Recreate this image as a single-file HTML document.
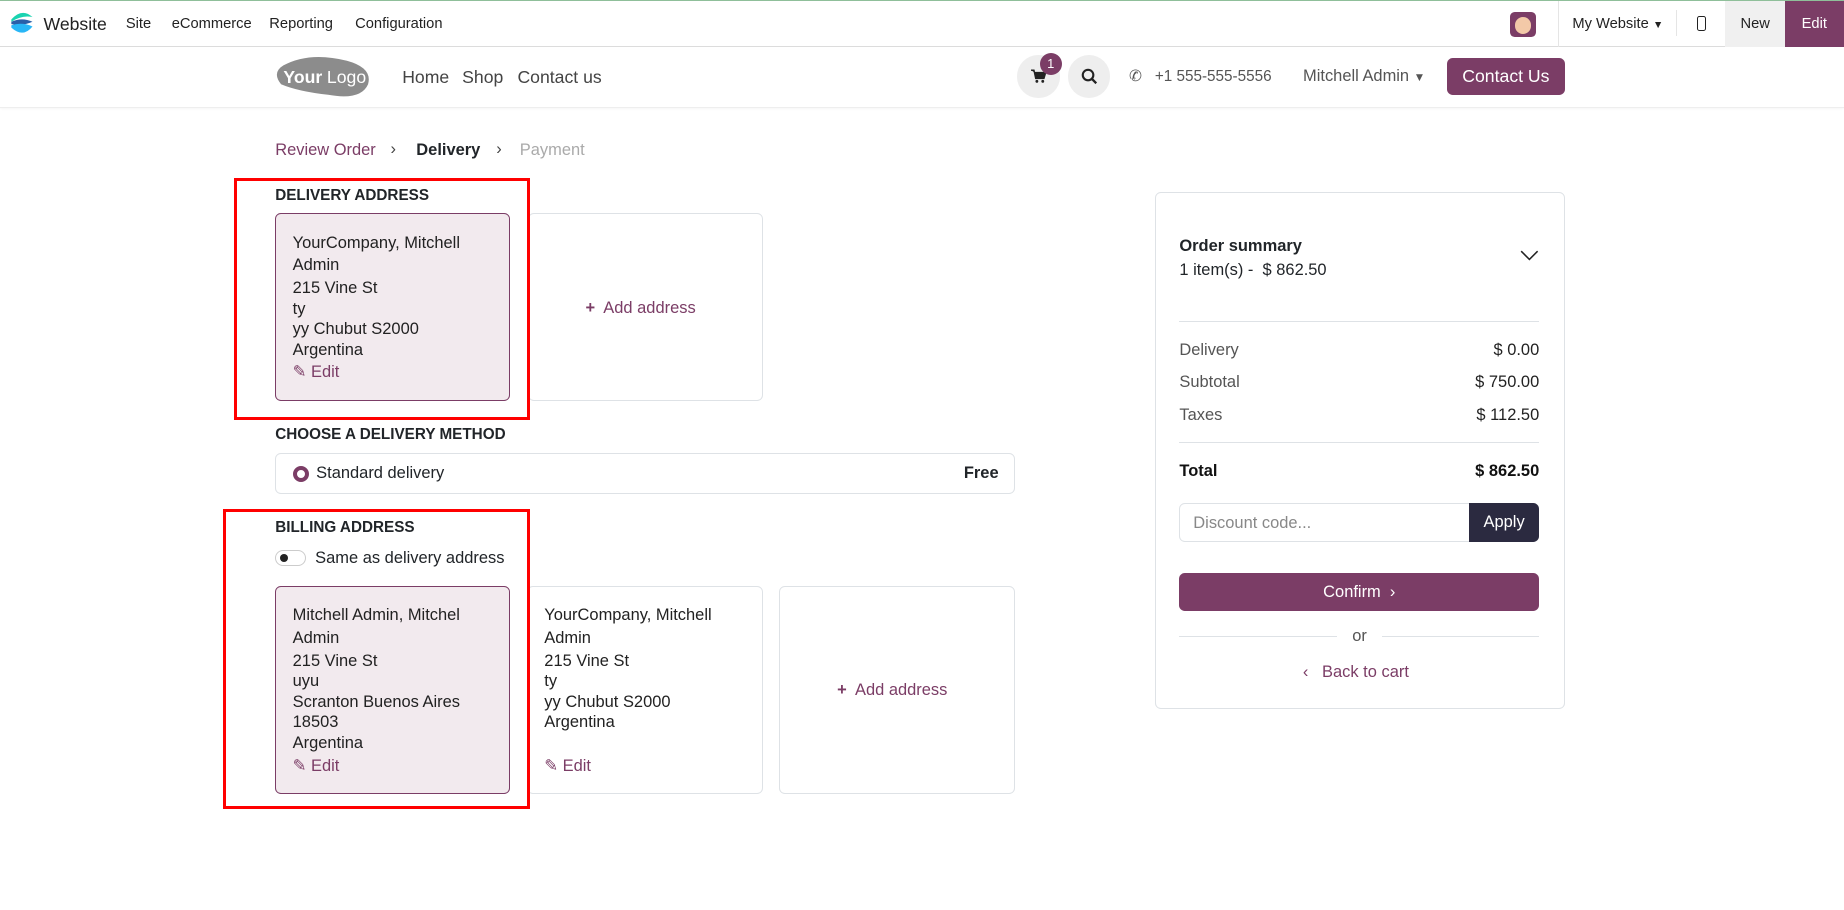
<!DOCTYPE html>
<html><head><meta charset="utf-8"><style>
html,body{margin:0;padding:0;background:#fff;overflow:hidden}
body{width:1844px;height:910px}
#w{zoom:1.17602;width:1568px;height:774px;position:relative;font-family:"Liberation Sans",sans-serif;color:#212529}
.a{position:absolute;white-space:nowrap}
.top{position:absolute;left:0;top:0;width:1568px;height:40px;border-top:1px solid #8fbf9a;border-bottom:1px solid #dcdcdc;box-sizing:border-box;font-size:12.5px;color:#222}
.hdr{position:absolute;left:0;top:40px;width:1568px;height:51px;border-bottom:1px solid #eee;box-shadow:0 1px 2px rgba(0,0,0,.05)}
.card{position:absolute;border:1px solid #dee2e6;border-radius:5px;box-sizing:border-box;background:#fff}
.sel{background:#f2eaee;border-color:#7b3d66}
.addr{position:absolute;left:14px;font-size:14px;line-height:17.5px;color:#222}
.edit{color:#7b3d66}
.red{position:absolute;border:3px solid #f00;box-sizing:border-box}
.h{font-weight:bold;font-size:13px;position:absolute}
.hr{position:absolute;height:1px;background:#dee2e6}
.row{position:absolute;left:20px;width:306px;font-size:14px;display:flex;justify-content:space-between;color:#555}
.row b{font-weight:normal;color:#222}
</style></head><body><div id="w">
<div class="top">
 <svg class="a" style="left:8px;top:8px" width="22" height="22" viewBox="0 0 22 22"><path d="M2 8 Q11 -2 20 6 Q11 4 2 10Z" fill="#1ad3b0"/><path d="M2 10 Q11 6 20 10 Q11 14 2 12Z" fill="#2a5fa8"/><path d="M2 13 Q11 10 20 14 Q12 24 2 15Z" fill="#28b6f6"/></svg>
 <span class="a" style="left:37px;top:11px;font-size:15px">Website</span>
 <span class="a" style="left:107px;top:13px">Site</span>
 <span class="a" style="left:146px;top:13px">eCommerce</span>
 <span class="a" style="left:229px;top:13px">Reporting</span>
 <span class="a" style="left:302px;top:13px">Configuration</span>
 <div class="a" style="left:1284px;top:9px;width:22px;height:22px;border-radius:4px;background:#7b3d66"><div style="margin:5px 4px;width:14px;height:14px;border-radius:50%;background:#f3c9a8"></div></div>
 <div class="a" style="left:1325px;top:0;width:1px;height:39px;background:#e5e5e5"></div>
 <span class="a" style="left:1337px;top:13px">My Website <span style="font-size:9px">▼</span></span>
 <div class="a" style="left:1425px;top:8px;width:1px;height:22px;background:#e5e5e5"></div>
 <div class="a" style="left:1443px;top:13px;width:6px;height:11px;border:1.5px solid #222;border-radius:2px"></div>
 <div class="a" style="left:1467px;top:0;width:51px;height:39px;background:#f0f0f0"><span class="a" style="left:13px;top:13px">New</span></div>
 <div class="a" style="left:1518px;top:0;width:50px;height:39px;background:#7b3d66;color:#fff"><span class="a" style="left:14px;top:13px">Edit</span></div>
</div>
<div class="hdr">
 <svg class="a" style="left:233px;top:8px" width="84" height="36" viewBox="0 0 84 36"><path d="M8 8 Q30 -4 62 4 Q84 10 80 24 Q74 38 46 33 Q20 30 6 24 Q-2 14 8 8Z" fill="#8c8c8c"/><text x="8" y="23" font-family="Liberation Sans" font-size="15" font-weight="bold" fill="#fff">Your</text><text x="45" y="23" font-family="Liberation Sans" font-size="15" fill="#fff">Logo</text></svg>
 <span class="a" style="left:342px;top:17px;font-size:15px;color:#444">Home</span>
 <span class="a" style="left:393px;top:17px;font-size:15px;color:#444">Shop</span>
 <span class="a" style="left:440px;top:17px;font-size:15px;color:#444">Contact us</span>
 <div class="a" style="left:865px;top:7px;width:36px;height:36px;border-radius:50%;background:#eee"><svg class="a" style="left:12px;top:12px" width="13" height="12" viewBox="0 0 13 12"><path d="M0 1H2.5L4 8H11L12.5 3H3" fill="#222" stroke="#222" stroke-width="1.2"/><circle cx="5" cy="10.5" r="1.2" fill="#222"/><circle cx="10" cy="10.5" r="1.2" fill="#222"/></svg></div>
 <div class="a" style="left:884px;top:5px;width:19px;height:19px;border-radius:50%;background:#7b3d66;color:#fff;font-size:11px;text-align:center;line-height:19px">1</div>
 <div class="a" style="left:908px;top:7px;width:36px;height:36px;border-radius:50%;background:#eee"><svg class="a" style="left:11px;top:11px" width="14" height="14" viewBox="0 0 14 14"><circle cx="6" cy="6" r="4.5" stroke="#222" stroke-width="1.8" fill="none"/><path d="M9 9L13 13" stroke="#222" stroke-width="2"/></svg></div>
 <span class="a" style="left:960px;top:17px;font-size:13px;color:#555">✆</span>
 <span class="a" style="left:982px;top:18px;font-size:13px;color:#555">+1 555-555-5556</span>
 <span class="a" style="left:1108px;top:17px;font-size:14px;color:#555">Mitchell Admin <span style="font-size:10px">▼</span></span>
 <div class="a" style="left:1230px;top:9px;width:101px;height:32px;border-radius:5px;background:#7b3d66;color:#fff;font-size:15px;text-align:center;line-height:32px">Contact Us</div>
</div>
<span class="a" style="left:234px;top:120px;font-size:14px;color:#7b3d66">Review Order</span>
<span class="a" style="left:332px;top:119px;font-size:14px;color:#444">›</span>
<span class="a" style="left:354px;top:120px;font-size:14px;font-weight:bold">Delivery</span>
<span class="a" style="left:422px;top:119px;font-size:14px;color:#444">›</span>
<span class="a" style="left:442px;top:120px;font-size:14px;color:#aaa">Payment</span>

<div class="h" style="left:234px;top:159px">DELIVERY ADDRESS</div>
<div class="card" style="left:449px;top:181px;width:200px;height:160px"><span class="a" style="left:48px;top:72px;font-size:14px;color:#7b3d66"><b>+</b>&nbsp; Add address</span></div>
<div class="card sel" style="left:234px;top:181px;width:200px;height:160px">
 <div class="addr" style="top:16px">YourCompany, Mitchell<br><span style="line-height:21px">Admin</span><br>215 Vine St<br>ty<br>yy Chubut S2000<br>Argentina<br><span class="edit" style="line-height:21px">✎ Edit</span></div></div>
<div class="red" style="left:199px;top:151px;width:252px;height:206px"></div>

<div class="h" style="left:234px;top:362px">CHOOSE A DELIVERY METHOD</div>
<div class="card" style="left:234px;top:385px;width:629px;height:35px">
 <div class="a" style="left:14px;top:10px;width:7px;height:7px;border:3.5px solid #7b3d66;border-radius:50%"></div>
 <span class="a" style="left:34px;top:9px;font-size:14px">Standard delivery</span>
 <span class="a" style="right:13px;top:9px;font-size:14px;font-weight:bold">Free</span></div>

<div class="h" style="left:234px;top:441px">BILLING ADDRESS</div>
<div class="a" style="left:234px;top:468px;width:26px;height:13px;border:1px solid #ccc;border-radius:7px;box-sizing:border-box"><div style="margin:2px 3px;width:7px;height:7px;border-radius:50%;background:#222"></div></div>
<span class="a" style="left:268px;top:467px;font-size:14px">Same as delivery address</span>
<div class="card sel" style="left:234px;top:498px;width:200px;height:177px">
 <div class="addr" style="top:16px">Mitchell Admin, Mitchel<br><span style="line-height:21px">Admin</span><br>215 Vine St<br>uyu<br>Scranton Buenos Aires<br>18503<br>Argentina<br><span class="edit" style="line-height:21px">✎ Edit</span></div></div>
<div class="card" style="left:448px;top:498px;width:201px;height:177px">
 <div class="addr" style="top:16px">YourCompany, Mitchell<br><span style="line-height:21px">Admin</span><br>215 Vine St<br>ty<br>yy Chubut S2000<br>Argentina<br><br><span class="edit" style="line-height:21px">✎ Edit</span></div></div>
<div class="card" style="left:662px;top:498px;width:201px;height:177px"><span class="a" style="left:49px;top:80px;font-size:14px;color:#7b3d66"><b>+</b>&nbsp; Add address</span></div>
<div class="red" style="left:190px;top:433px;width:261px;height:255px"></div>

<div class="card" style="left:982px;top:163px;width:349px;height:440px">
 <span class="a" style="left:20px;top:38px;font-size:14px;font-weight:bold">Order summary</span>
 <span class="a" style="left:20px;top:58px;font-size:14px">1 item(s) -&nbsp; $ 862.50</span>
 <svg class="a" style="left:310px;top:49px" width="16" height="10" viewBox="0 0 16 10"><path d="M1 1L8 8L15 1" stroke="#222" stroke-width="1.3" fill="none"/></svg>
 <div class="hr" style="left:20px;top:109px;width:306px"></div>
 <div class="row" style="top:126px"><span>Delivery</span><b>$ 0.00</b></div>
 <div class="row" style="top:153px"><span>Subtotal</span><b>$ 750.00</b></div>
 <div class="row" style="top:181px"><span>Taxes</span><b>$ 112.50</b></div>
 <div class="hr" style="left:20px;top:212px;width:306px"></div>
 <div class="row" style="top:229px;font-weight:bold;color:#111"><span>Total</span><span>$ 862.50</span></div>
 <div class="a" style="left:20px;top:264px;width:306px;height:33px;border:1px solid #dee2e6;border-radius:5px;box-sizing:border-box"><span class="a" style="left:11px;top:8px;font-size:14px;color:#888">Discount code...</span>
 <div class="a" style="right:-1px;top:-1px;width:60px;height:33px;background:#2b2a40;border-radius:0 5px 5px 0;color:#fff;font-size:14px;text-align:center;line-height:33px">Apply</div></div>
 <div class="a" style="left:20px;top:323px;width:306px;height:33px;background:#7b3d66;border-radius:5px;color:#fff;font-size:14px;text-align:center;line-height:33px">Confirm&nbsp; ›</div>
 <div class="hr" style="left:20px;top:377px;width:134px"></div>
 <div class="hr" style="left:192px;top:377px;width:134px"></div>
 <span class="a" style="left:167px;top:369px;font-size:14px;color:#555">or</span>
 <span class="a" style="left:125px;top:400px;font-size:14px;color:#7b3d66">‹&nbsp;&nbsp; Back to cart</span>
</div>
</div></body></html>
